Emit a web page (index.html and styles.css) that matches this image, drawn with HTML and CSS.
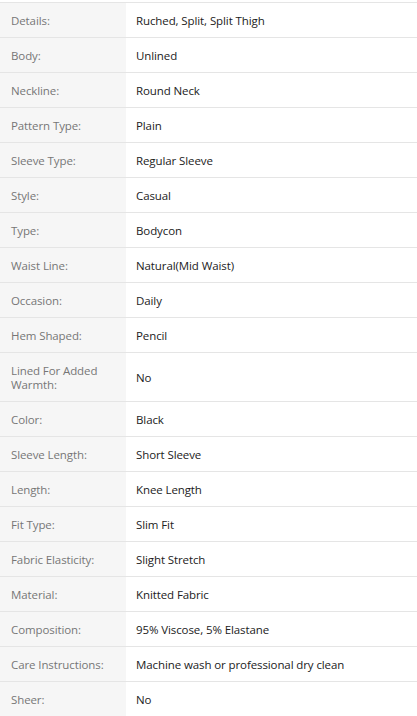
FILE: index.html
```html
<!DOCTYPE html>
<html>
<head>
<meta charset="utf-8">
<link rel="stylesheet" href="styles.css">
</head>
<body>
<div class="attrs">
  <div class="row"><div class="k">Details:</div><div class="v">Ruched, Split, Split Thigh</div></div>
  <div class="row"><div class="k">Body:</div><div class="v">Unlined</div></div>
  <div class="row"><div class="k">Neckline:</div><div class="v">Round Neck</div></div>
  <div class="row"><div class="k">Pattern Type:</div><div class="v">Plain</div></div>
  <div class="row"><div class="k">Sleeve Type:</div><div class="v">Regular Sleeve</div></div>
  <div class="row"><div class="k">Style:</div><div class="v">Casual</div></div>
  <div class="row"><div class="k">Type:</div><div class="v">Bodycon</div></div>
  <div class="row"><div class="k">Waist Line:</div><div class="v">Natural(Mid Waist)</div></div>
  <div class="row"><div class="k">Occasion:</div><div class="v">Daily</div></div>
  <div class="row"><div class="k">Hem Shaped:</div><div class="v">Pencil</div></div>
  <div class="row"><div class="k">Lined For Added Warmth:</div><div class="v">No</div></div>
  <div class="row"><div class="k">Color:</div><div class="v">Black</div></div>
  <div class="row"><div class="k">Sleeve Length:</div><div class="v">Short Sleeve</div></div>
  <div class="row"><div class="k">Length:</div><div class="v">Knee Length</div></div>
  <div class="row"><div class="k">Fit Type:</div><div class="v">Slim Fit</div></div>
  <div class="row"><div class="k">Fabric Elasticity:</div><div class="v">Slight Stretch</div></div>
  <div class="row"><div class="k">Material:</div><div class="v">Knitted Fabric</div></div>
  <div class="row"><div class="k">Composition:</div><div class="v">95% Viscose, 5% Elastane</div></div>
  <div class="row"><div class="k">Care Instructions:</div><div class="v">Machine wash or professional dry clean</div></div>
  <div class="row"><div class="k">Sheer:</div><div class="v">No</div></div>
</div>
</body>
</html>
```
FILE: styles.css
```css
html, body {
  margin: 0;
  padding: 0;
  background: #fff;
}
body {
  padding-top: 2px;
  font-family: "Open Sans", "Noto Sans", sans-serif;
  font-size: 11.5px;
  letter-spacing: -0.1px;
}
.attrs {
  border-top: 1px solid #e5e5e5;
}
.row {
  display: flex;
  border-bottom: 1px solid #e5e5e5;
}
.k {
  width: 126px;
  flex: none;
  box-sizing: border-box;
  background: #f6f6f6;
  color: #767676;
  padding: 11px 14px 9px 11px;
  line-height: 14px;
  display: flex;
  align-items: center;
}
.v {
  flex: 1;
  color: #222;
  padding: 11px 10px 9px 10px;
  line-height: 14px;
  display: flex;
  align-items: center;
}
```
